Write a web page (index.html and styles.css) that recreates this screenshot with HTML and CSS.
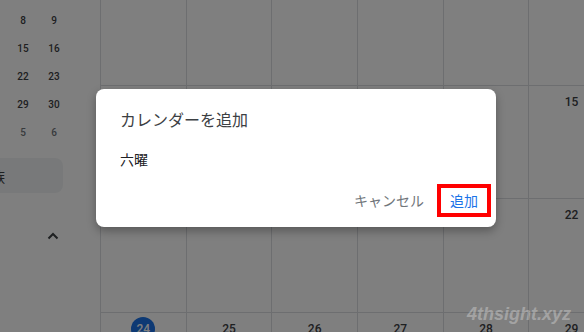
FILE: index.html
```html
<!DOCTYPE html>
<html lang="ja">
<head>
<meta charset="utf-8">
<title>カレンダーを追加</title>
<link rel="stylesheet" href="styles.css">
</head>
<body>
<div class="app">
  <aside class="sidebar">
    <div class="mini">
      <span>8</span><span>9</span>
      <span>15</span><span>16</span>
      <span>22</span><span>23</span>
      <span>29</span><span>30</span>
      <span class="other">5</span><span class="other">6</span>
    </div>
    <div class="pill"><span class="pill-text">家族</span></div>
    <div class="chev">
      <svg width="12" height="8" viewBox="0 0 12 8"><path d="M1.5 6.5 L6 2 L10.5 6.5" fill="none" stroke="#3c4043" stroke-width="2"/></svg>
    </div>
  </aside>
  <main class="main">
    <div class="grid">
      <div class="cell"></div>
      <div class="cell"></div>
      <div class="cell"></div>
      <div class="cell"></div>
      <div class="cell"></div>
      <div class="cell"></div>
      <div class="cell"><div class="num">10</div></div>
      <div class="cell"><div class="num">11</div></div>
      <div class="cell"><div class="num">12</div></div>
      <div class="cell"><div class="num">13</div></div>
      <div class="cell"><div class="num">14</div></div>
      <div class="cell"><div class="num">15</div></div>
      <div class="cell"><div class="num">17</div></div>
      <div class="cell"><div class="num">18</div></div>
      <div class="cell"><div class="num">19</div></div>
      <div class="cell"><div class="num">20</div></div>
      <div class="cell"><div class="num">21</div></div>
      <div class="cell"><div class="num">22</div></div>
      <div class="cell"><div class="num today">24</div></div>
      <div class="cell"><div class="num">25</div></div>
      <div class="cell"><div class="num">26</div></div>
      <div class="cell"><div class="num">27</div></div>
      <div class="cell"><div class="num">28</div></div>
      <div class="cell"><div class="num">29</div></div>
    </div>
  </main>
</div>
<div class="scrim"></div>
<div class="dialog">
  <div class="dlg-title">カレンダーを追加</div>
  <div class="dlg-body">六曜</div>
  <div class="dlg-actions">
    <span class="btn cancel">キャンセル</span>
    <span class="btn add">追加</span>
  </div>
</div>
<div class="watermark">4thsight.xyz</div>
</body>
</html>
```
FILE: styles.css
```css
html, body {
  margin: 0;
  padding: 0;
}
body {
  width: 584px;
  height: 332px;
  overflow: hidden;
  background: #ffffff;
  font-family: Roboto, "Noto Sans CJK JP", sans-serif;
  position: relative;
}
.app {
  display: flex;
  width: 584px;
  height: 332px;
  overflow: hidden;
}
.sidebar {
  width: 100px;
  flex: none;
  display: flex;
  flex-direction: column;
  overflow: hidden;
}
.mini {
  display: grid;
  grid-template-columns: 31px 31px;
  grid-auto-rows: 28px;
  padding: 6px 0 0 7.5px;
  font-size: 10px;
  font-weight: 500;
  color: #3c4043;
}
.mini span {
  display: flex;
  align-items: center;
  justify-content: center;
}
.mini .other {
  color: #70757a;
}
.pill {
  margin-top: 12px;
  margin-left: -30px;
  width: 93px;
  height: 35px;
  border-radius: 8px;
  background: #f1f3f4;
  display: flex;
  align-items: center;
  font-family: "Noto Sans CJK JP", sans-serif;
  font-size: 14px;
  color: #3c4043;
}
.pill-text {
  margin-left: 7px;
}
.chev {
  margin-top: 39px;
  padding-left: 47px;
  height: 8px;
  display: flex;
}
.main {
  flex: 1;
  overflow: hidden;
}
.grid {
  display: grid;
  grid-template-columns: repeat(6, 85.67px);
  grid-template-rows: repeat(4, 113.3px);
  margin-top: -27.3px;
}
.cell {
  box-sizing: border-box;
  border-left: 1px solid #dadce0;
  border-bottom: 1px solid #dadce0;
  display: flex;
  justify-content: center;
  align-items: flex-start;
}
.num {
  margin-top: 4px;
  width: 24px;
  height: 24px;
  line-height: 24px;
  border-radius: 50%;
  text-align: center;
  font-size: 12px;
  font-weight: 500;
  color: #3c4043;
}
.num.today {
  background: #1a73e8;
  color: #ffffff;
}
.scrim {
  position: absolute;
  left: 0;
  top: 0;
  width: 584px;
  height: 332px;
  background: rgba(0, 0, 0, 0.5);
}
.dialog {
  position: absolute;
  left: 96px;
  top: 89px;
  width: 400px;
  height: 138px;
  box-sizing: border-box;
  background: #ffffff;
  border-radius: 8px;
  box-shadow: 0 4px 10px rgba(0, 0, 0, 0.3);
  padding: 18px 5px 10px 24px;
  font-family: "Noto Sans CJK JP", sans-serif;
}
.dlg-title {
  font-size: 16px;
  line-height: 24px;
  color: #3c4043;
}
.dlg-body {
  margin-top: 18px;
  font-size: 14px;
  line-height: 20px;
  color: #202124;
}
.dlg-actions {
  margin-top: 15px;
  display: flex;
  justify-content: flex-end;
  align-items: center;
  gap: 13px;
}
.btn {
  font-size: 14px;
  line-height: 25px;
}
.cancel {
  color: #70757a;
}
.add {
  color: #1a73e8;
  border: 4px solid #ff0000;
  padding: 0 9px;
}
.watermark {
  position: absolute;
  left: 467px;
  top: 305px;
  font-family: "Liberation Sans", Arial, sans-serif;
  font-size: 18px;
  line-height: 18px;
  font-weight: bold;
  font-style: italic;
  color: rgba(255, 255, 255, 0.3);
}
```
